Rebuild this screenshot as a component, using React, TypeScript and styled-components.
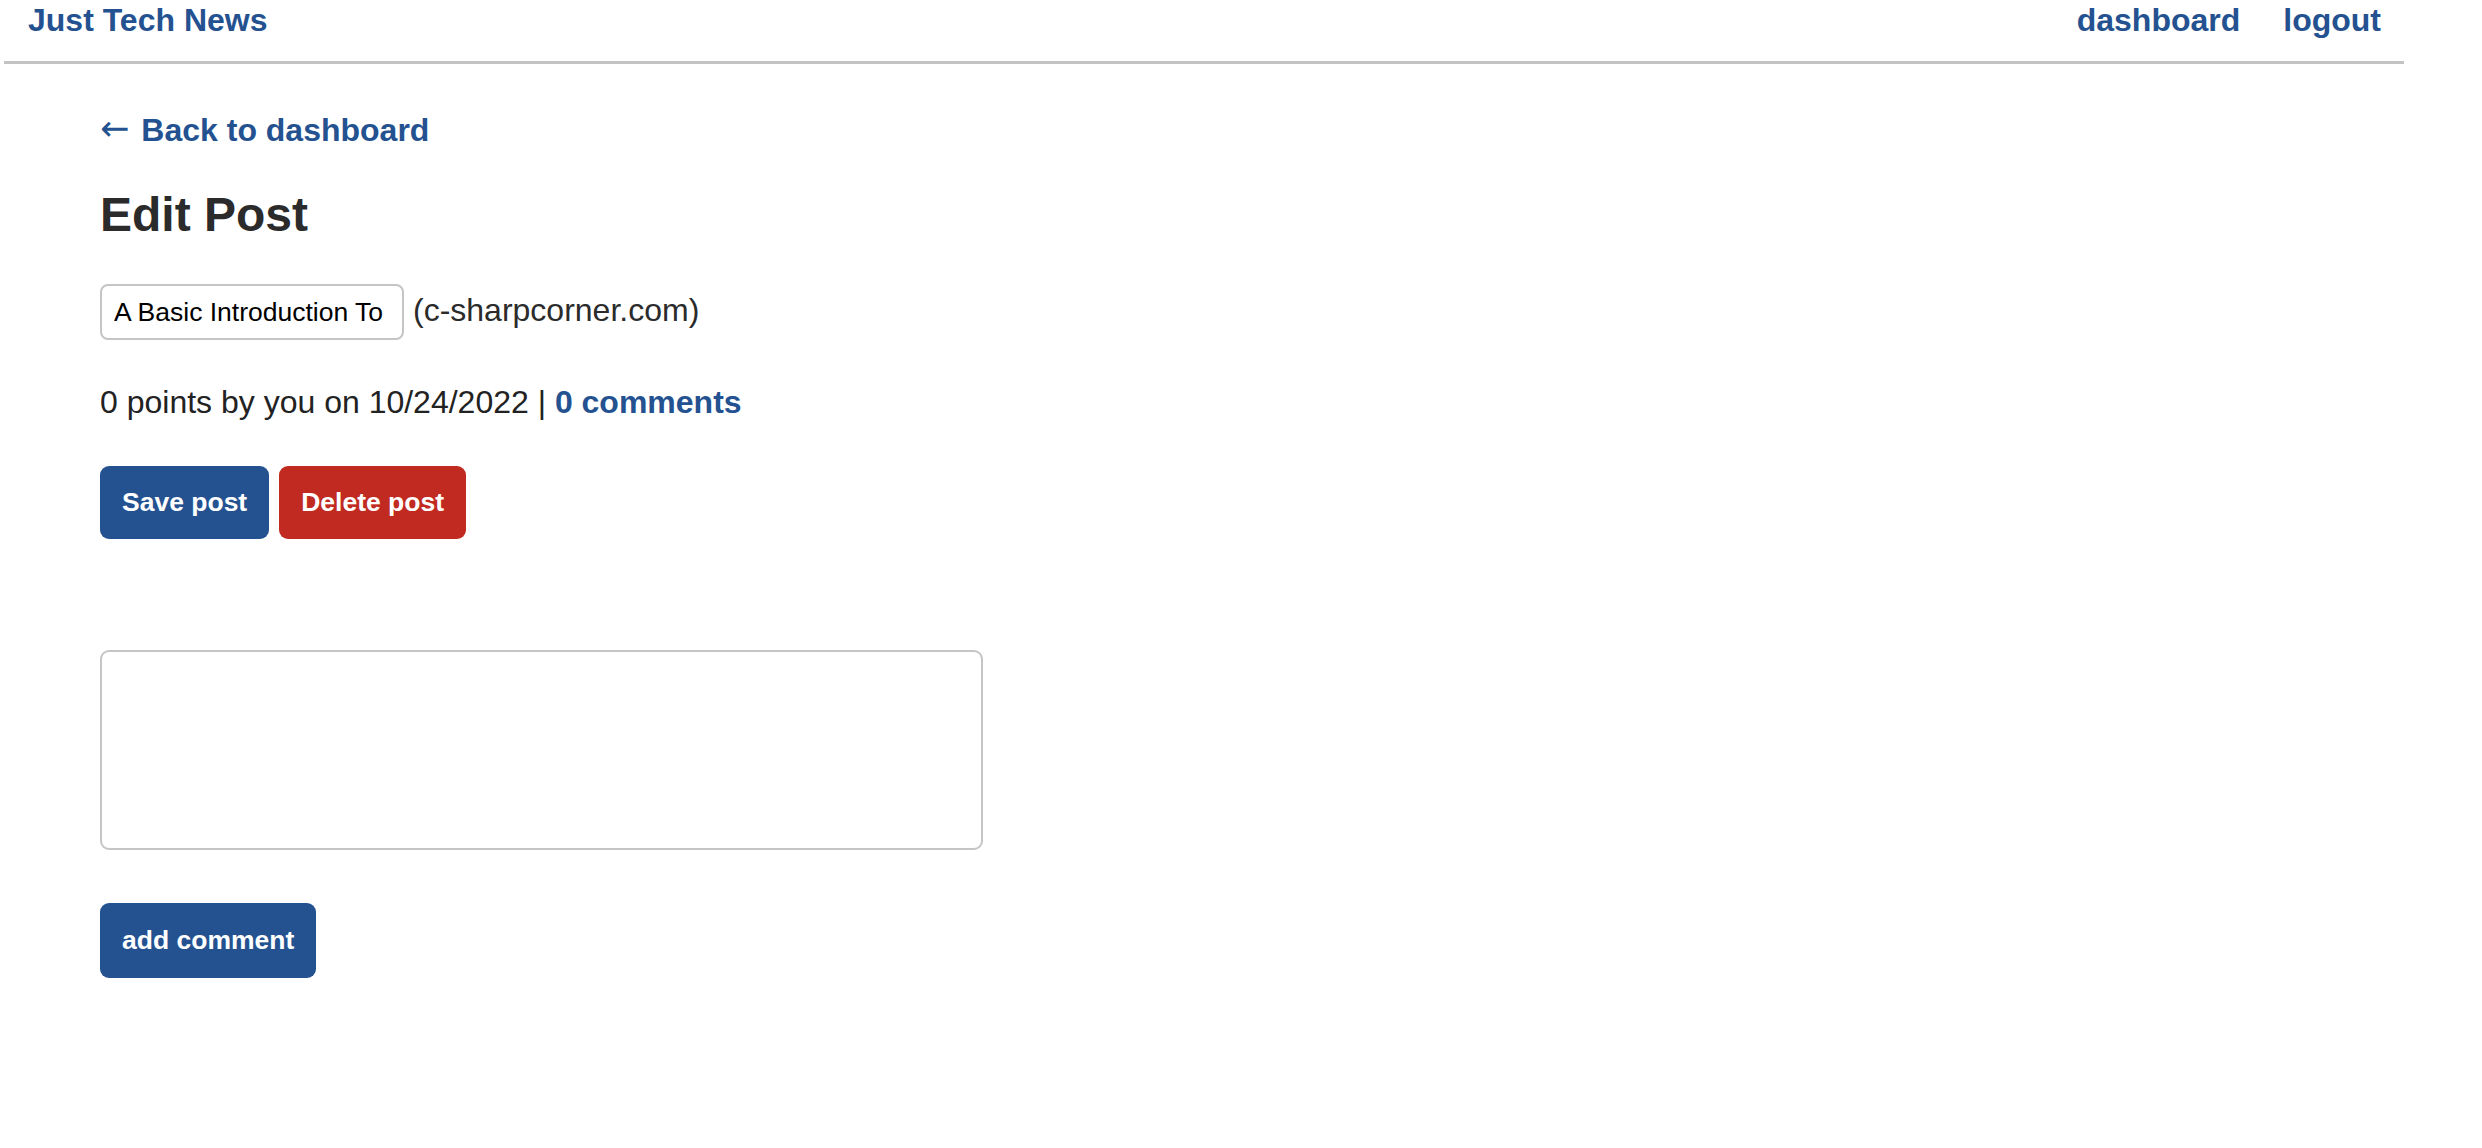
import styled, { createGlobalStyle } from "styled-components";

const GlobalStyle = createGlobalStyle`
  body {
    margin: 0;
    background: #fff;
    font-family: "Liberation Sans", Arial, Helvetica, sans-serif;
    color: #222;
  }
`;

const blue = "#245291";
const red = "#c12a21";

const HeaderWrap = styled.header`
  width: 2400px;
  margin-left: 4px;
  border-bottom: 3px solid #c3c3c3;
`;

const Nav = styled.nav`
  display: flex;
  justify-content: space-between;
  align-items: center;
  padding: 2px 23px 22px 24px;
`;

const NavLink = styled.a`
  color: ${blue};
  font-size: 32px;
  font-weight: bold;
  text-decoration: none;
  line-height: 37px;
`;

const NavLinks = styled.div`
  display: flex;
  gap: 43px;
`;

const Main = styled.main`
  padding: 0 100px;
`;

const BackLink = styled.a`
  display: inline-block;
  margin-top: 48px;
  color: ${blue};
  font-size: 32px;
  font-weight: bold;
  line-height: 37px;
  height: 37px;
  text-decoration: none;
`;

const Arrow = styled.span`
  font-family: "DejaVu Sans", sans-serif;
  font-weight: normal;
  font-size: 35px;
  line-height: 0;
  margin-right: 12px;
  position: relative;
  top: -1px;
`;

const Title = styled.h2`
  margin: 38px 0 0 0;
  font-size: 48px;
  line-height: 55px;
  color: #2b2b2b;
`;

const PostRow = styled.div`
  display: flex;
  align-items: baseline;
  gap: 9px;
  margin-top: 42px;
  font-size: 32px;
  color: #2b2b2b;
`;

const TitleInput = styled.input`
  box-sizing: border-box;
  width: 304px;
  height: 56px;
  padding: 0 12px;
  border: 2px solid #c5c5c5;
  border-radius: 8px;
  font-family: "Liberation Sans", Arial, sans-serif;
  font-size: 26.5px;
  color: #000;
  outline: none;
`;

const Meta = styled.p`
  margin: 44px 0 0 0;
  font-size: 32px;
  line-height: 37px;
  color: #222;
`;

const MetaLink = styled.a`
  color: ${blue};
  font-weight: bold;
  text-decoration: none;
`;

const ButtonRow = styled.div`
  display: flex;
  gap: 10px;
  margin-top: 45px;
`;

const Button = styled.button<{ $tone?: "primary" | "danger" }>`
  box-sizing: border-box;
  height: ${(p) => (p.$tone ? "73px" : "75px")};
  padding: 0 22px;
  border: none;
  border-radius: 9px;
  background: ${(p) => (p.$tone === "danger" ? red : blue)};
  color: #fff;
  font-family: "Liberation Sans", Arial, sans-serif;
  font-size: 26.5px;
  font-weight: bold;
  cursor: pointer;
`;

const CommentForm = styled.form`
  display: flex;
  flex-direction: column;
  align-items: flex-start;
  margin-top: 111px;
  gap: 53px;
`;

const CommentBox = styled.textarea`
  box-sizing: border-box;
  width: 883px;
  height: 200px;
  border: 2px solid #c5c5c5;
  border-radius: 9px;
  resize: none;
  outline: none;
`;

export default function App() {
  return (
    <>
      <GlobalStyle />
      <HeaderWrap>
        <Nav>
          <NavLink href="#">Just Tech News</NavLink>
          <NavLinks>
            <NavLink href="#">dashboard</NavLink>
            <NavLink href="#">logout</NavLink>
          </NavLinks>
        </Nav>
      </HeaderWrap>
      <Main>
        <BackLink href="#">
          <Arrow>←</Arrow>Back to dashboard
        </BackLink>
        <Title>Edit Post</Title>
        <PostRow>
          <TitleInput defaultValue="A Basic Introduction To TypeScript" />
          <span>(c-sharpcorner.com)</span>
        </PostRow>
        <Meta>
          0 points by you on 10/24/2022 | <MetaLink href="#">0 comments</MetaLink>
        </Meta>
        <ButtonRow>
          <Button $tone="primary">Save post</Button>
          <Button $tone="danger">Delete post</Button>
        </ButtonRow>
        <CommentForm onSubmit={(e) => e.preventDefault()}>
          <CommentBox />
          <Button type="submit">add comment</Button>
        </CommentForm>
      </Main>
    </>
  );
}
